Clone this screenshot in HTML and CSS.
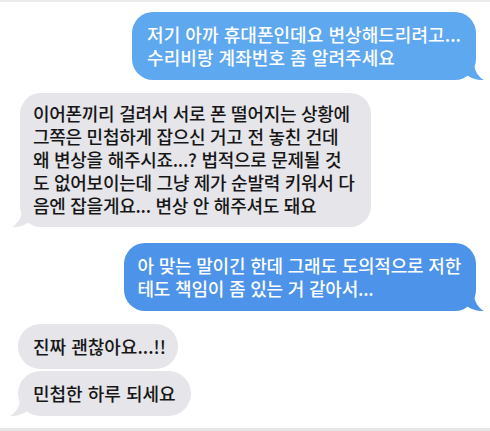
FILE: index.html
```html
<!DOCTYPE html>
<html lang="ko">
<head>
<meta charset="utf-8">
<link rel="stylesheet" href="styles.css">
</head>
<body>
<div class="chat">
  <div class="msg out light m1">저기 아까 휴대폰인데요 변상해드리려고...<br>수리비랑 계좌번호 좀 알려주세요</div>
  <div class="msg in m2">이어폰끼리 걸려서 서로 폰 떨어지는 상황에<br>그쪽은 민첩하게 잡으신 거고 전 놓친 건데<br>왜 변상을 해주시죠...? 법적으로 문제될 것<br>도 없어보이는데 그냥 제가 순발력 키워서 다<br>음엔 잡을게요... 변상 안 해주셔도 돼요</div>
  <div class="msg out m3">아 맞는 말이긴 한데 그래도 도의적으로 저한<br>테도 책임이 좀 있는 거 같아서...</div>
  <div class="msg in notail m4">진짜 괜찮아요...!!</div>
  <div class="msg in m5">민첩한 하루 되세요</div>
</div>
</body>
</html>
```
FILE: styles.css
```css
html, body {
  margin: 0;
  padding: 0;
  background: #ffffff;
}
body {
  width: 490px;
  height: 431px;
  overflow: hidden;
  font-family: "Noto Sans CJK KR", "Noto Sans", sans-serif;
}
.chat {
  box-sizing: border-box;
  height: 431px;
  border-top: 2px solid #ececec;
  border-bottom: 3px solid #e6e6e6;
  display: flex;
  flex-direction: column;
  padding: 10px 14px 0 18px;
}
.msg {
  position: relative;
  font-size: 18px;
  font-weight: 500;
  line-height: 23px;
  padding: 11px 15px;
  border-radius: 21px;
  white-space: nowrap;
}
.out {
  align-self: flex-end;
  background: #4c93e9;
  color: #ffffff;
}
.out.light {
  background: #5ea8ef;
}
.in {
  align-self: flex-start;
  background: #e5e5ea;
  color: #161616;
}
.out::after {
  content: "";
  position: absolute;
  right: -8px;
  bottom: 0;
  width: 18px;
  height: 18px;
  background: inherit;
  clip-path: path("M0 0 L8 0 C8 8 12 15 18 18 C10 18 4 16 0 12 Z");
}
.in::after {
  content: "";
  position: absolute;
  left: -8px;
  bottom: 0;
  width: 18px;
  height: 18px;
  background: inherit;
  clip-path: path("M18 0 L10 0 C10 8 6 15 0 18 C8 18 14 16 18 12 Z");
}
.in.notail::after {
  display: none;
}
.m1 { letter-spacing: 0.05px; }
.m2 { margin-top: 13px; margin-left: 2px; letter-spacing: -0.28px; padding-left: 13px; padding-right: 16px; padding-bottom: 10px; padding-top: 9px; }
.m3 { margin-top: 16px; letter-spacing: -0.2px; padding-left: 13px; }
.m4 { margin-top: 13px; border-radius: 23px; padding-right: 12px; }
.m5 { margin-top: 2px; border-radius: 23px; }
```
